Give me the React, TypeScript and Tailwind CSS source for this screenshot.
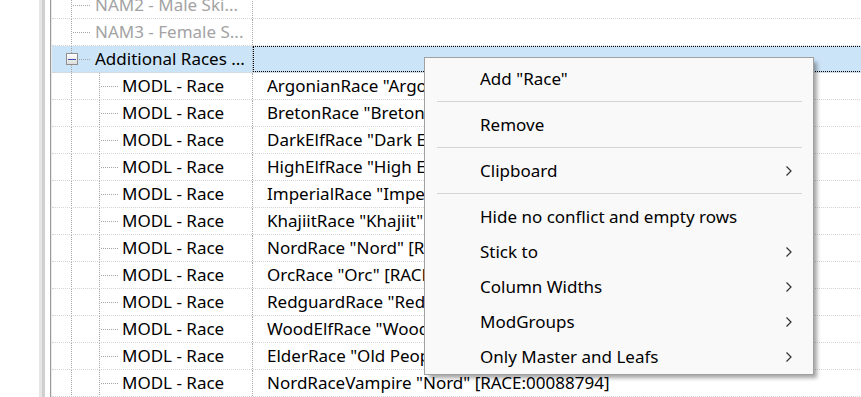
import React from "react";

const DOT = "#a6a6a6";

function GutterLeaf() {
  return (
    <svg width="43" height="26" className="shrink-0" shapeRendering="crispEdges">
      <line x1="19.5" y1="0" x2="19.5" y2="26" stroke={DOT} strokeDasharray="1 1" />
      <line x1="21" y1="13.5" x2="39" y2="13.5" stroke={DOT} strokeDasharray="1 1" />
    </svg>
  );
}

function GutterExpanded() {
  return (
    <svg width="43" height="26" className="shrink-0" shapeRendering="crispEdges">
      <line x1="19.5" y1="0" x2="19.5" y2="7" stroke={DOT} strokeDasharray="1 1" />
      <line x1="19.5" y1="19" x2="19.5" y2="26" stroke={DOT} strokeDasharray="1 1" />
      <defs>
        <linearGradient id="bx" x1="0" y1="0" x2="0" y2="1">
          <stop offset="0" stopColor="#ffffff" />
          <stop offset="1" stopColor="#dcdcdc" />
        </linearGradient>
      </defs>
      <rect x="14.5" y="7.5" width="11" height="11" fill="url(#bx)" stroke="#8f8f8f" />
      <line x1="16" y1="13.5" x2="24" y2="13.5" stroke="#3a55a8" />
      <line x1="27" y1="13.5" x2="39" y2="13.5" stroke={DOT} strokeDasharray="1 1" />
    </svg>
  );
}

function GutterChild() {
  return (
    <svg width="70" height="26" className="shrink-0" shapeRendering="crispEdges">
      <line x1="19.5" y1="0" x2="19.5" y2="26" stroke={DOT} strokeDasharray="1 1" />
      <line x1="47.5" y1="0" x2="47.5" y2="26" stroke={DOT} strokeDasharray="1 1" />
      <line x1="49" y1="13.5" x2="66" y2="13.5" stroke={DOT} strokeDasharray="1 1" />
    </svg>
  );
}

type Row = {
  kind: "leaf" | "expanded" | "child";
  name: string;
  value?: string;
  grayed?: boolean;
  selected?: boolean;
};

const rows: Row[] = [
  { kind: "leaf", name: "NAM2 - Male Ski...", grayed: true },
  { kind: "leaf", name: "NAM3 - Female S...", grayed: true },
  { kind: "expanded", name: "Additional Races ...", selected: true },
  { kind: "child", name: "MODL - Race", value: 'ArgonianRace "Argonian" [RACE:00013740]' },
  { kind: "child", name: "MODL - Race", value: 'BretonRace "Breton" [RACE:00013741]' },
  { kind: "child", name: "MODL - Race", value: 'DarkElfRace "Dark Elf" [RACE:00013742]' },
  { kind: "child", name: "MODL - Race", value: 'HighElfRace "High Elf" [RACE:00013743]' },
  { kind: "child", name: "MODL - Race", value: 'ImperialRace "Imperial" [RACE:00013744]' },
  { kind: "child", name: "MODL - Race", value: 'KhajiitRace "Khajiit" [RACE:00013745]' },
  { kind: "child", name: "MODL - Race", value: 'NordRace "Nord" [RACE:00013746]' },
  { kind: "child", name: "MODL - Race", value: 'OrcRace "Orc" [RACE:00013747]' },
  { kind: "child", name: "MODL - Race", value: 'RedguardRace "Redguard" [RACE:00013748]' },
  { kind: "child", name: "MODL - Race", value: 'WoodElfRace "Wood Elf" [RACE:00013749]' },
  { kind: "child", name: "MODL - Race", value: 'ElderRace "Old People Race" [RACE:00067CD8]' },
  { kind: "child", name: "MODL - Race", value: 'NordRaceVampire "Nord" [RACE:00088794]' },
];

function Chevron() {
  return (
    <svg width="8" height="12" viewBox="0 0 8 12" className="shrink-0">
      <path d="M1.5 1.5 L6 6 L1.5 10.5" fill="none" stroke="#303030" strokeWidth="1.2" />
    </svg>
  );
}

function MenuItem({ label, sub }: { label: string; sub?: boolean }) {
  return (
    <div className="flex h-[35px] items-center justify-between pl-[55px] pr-[20px] text-black">
      <span className="whitespace-nowrap">{label}</span>
      {sub ? <Chevron /> : null}
    </div>
  );
}

function Sep() {
  return (
    <div className="py-[5px] pl-[12px] pr-[11px]">
      <div className="h-px bg-[#d5d5d5]" />
    </div>
  );
}

export default function App() {
  return (
    <div className="relative flex h-[397px] w-[861px] overflow-hidden bg-white font-['Noto_Sans',sans-serif] text-[17px] leading-none">
      <div className="w-[39px] shrink-0 bg-white" />
      <div className="w-[3px] shrink-0 bg-[#e6e6e6]" />
      <div className="w-[3px] shrink-0 bg-[#cfcfcf]" />
      <div className="w-[5px] shrink-0 bg-white" />
      <div className="w-px shrink-0 bg-[#9a9a9a]" />
      <div className="w-px shrink-0 bg-[#e8e8e8]" />
      <div className="mt-[-8px] flex w-[830px] shrink-0 flex-col">
        {rows.map((r, i) => (
          <div
            key={i}
            className={`flex h-[27px] shrink-0 border-b border-dotted border-[#d4d4d4] ${r.selected ? "bg-[#cce4f7]" : ""}`}
          >
            <div className="flex h-[26px] w-[200px] shrink-0 items-center overflow-hidden">
              {r.kind === "leaf" ? <GutterLeaf /> : r.kind === "expanded" ? <GutterExpanded /> : <GutterChild />}
              <span className={`whitespace-nowrap pb-[1px] ${r.grayed ? "text-[#a3a3a3]" : "text-black"}`}>{r.name}</span>
            </div>
            <div className="h-[26px] w-px shrink-0 border-l border-dotted border-[#a8a8a8]" />
            {r.selected ? (
              <div className="h-[26px] flex-1 border border-dotted border-black" />
            ) : (
              <div className="flex h-[26px] flex-1 items-center overflow-hidden pl-[14px]">
                <span className="whitespace-nowrap pb-[1px] text-black">{r.value}</span>
              </div>
            )}
          </div>
        ))}
      </div>

      <div className="absolute left-[424px] top-[57px] w-[390px] border border-[#a0a0a0] bg-[#f9f9f9] pt-[3px] shadow-[4px_4px_4px_-1px_rgba(0,0,0,0.35)]">
        <MenuItem label={'Add "Race"'} />
        <Sep />
        <MenuItem label="Remove" />
        <Sep />
        <MenuItem label="Clipboard" sub />
        <Sep />
        <MenuItem label="Hide no conflict and empty rows" />
        <MenuItem label="Stick to" sub />
        <MenuItem label="Column Widths" sub />
        <MenuItem label="ModGroups" sub />
        <MenuItem label="Only Master and Leafs" sub />
      </div>
    </div>
  );
}
